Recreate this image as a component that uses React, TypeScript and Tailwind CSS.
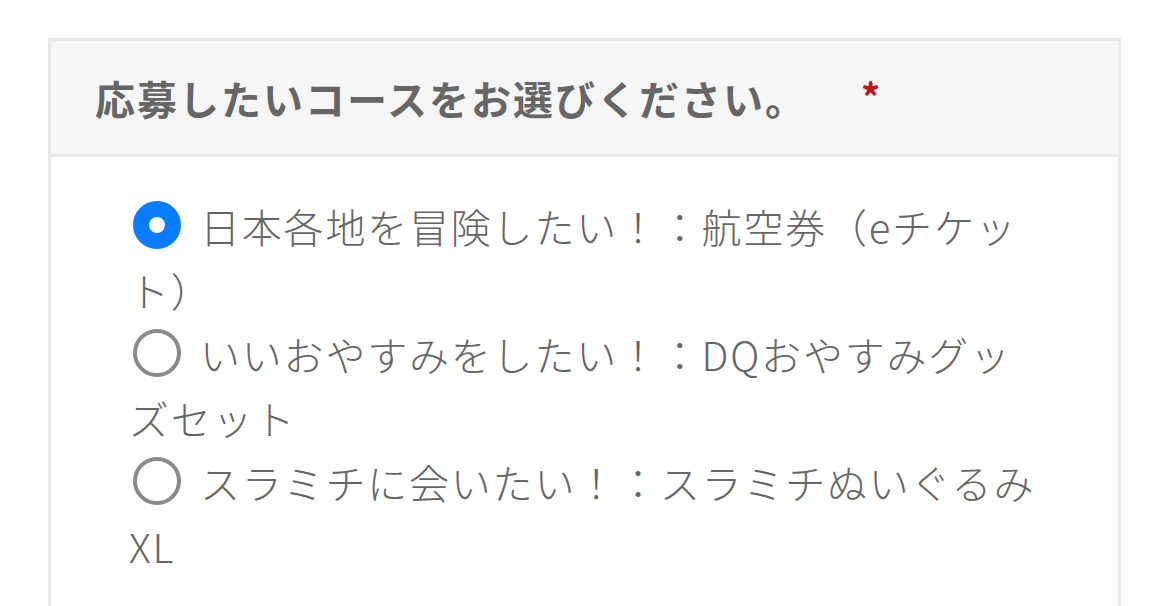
import { useState } from 'react'

const options = [
  '日本各地を冒険したい！：航空券（eチケット）',
  'いいおやすみをしたい！：DQおやすみグッズセット',
  'スラミチに会いたい！：スラミチぬいぐるみXL',
]

export default function App() {
  const [selected, setSelected] = useState(0)

  return (
    <div
      className="min-h-screen bg-white pt-[38px] pl-[48px] pr-[49px]"
      style={{ fontFamily: '"Noto Sans CJK JP", "Noto Sans", sans-serif' }}
    >
      <div className="border-[3px] border-b-0 border-[#e9e9e9] bg-white">
        <div className="flex items-center h-[116px] bg-[#f6f6f6] border-b-[3px] border-[#e9e9e9] pl-[44px]">
          <h2 className="text-[40px] font-bold tracking-[2px] text-[#666666] leading-none">応募したいコースをお選びください。</h2>
          <span className="ml-[54px] -mt-[4px] text-[38px] font-bold text-[#c0161a] leading-none">*</span>
        </div>

        <div className="pt-[37px] pb-[40px] pl-[78px] pr-[76px]">
          {options.map((label, i) => (
            <label
              key={label}
              className="block text-[40px] font-light tracking-[1.8px] leading-[64px] text-[#666666] cursor-pointer"
              onClick={() => setSelected(i)}
            >
              <span
                className={
                  selected === i
                    ? 'inline-block align-[-6px] w-[48px] h-[48px] ml-[4px] mr-[19px] rounded-full border-[16px] border-[#0a7cff] bg-white'
                    : 'inline-block align-[-6px] w-[48px] h-[48px] ml-[4px] mr-[19px] rounded-full border-[4px] border-[#8a8a8c] bg-white'
                }
              />
              {label}
            </label>
          ))}
        </div>
      </div>
    </div>
  )
}
